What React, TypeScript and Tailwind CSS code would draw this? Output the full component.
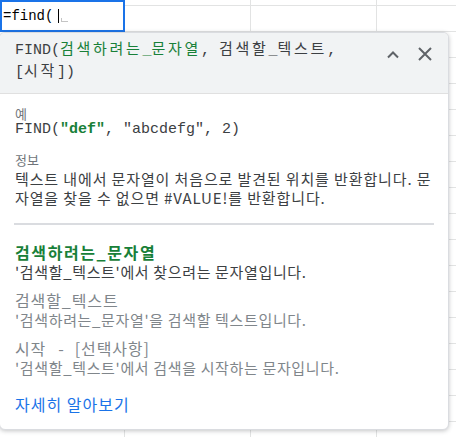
import React from "react"

const mono = "font-['Liberation_Mono','Noto_Sans_CJK_KR',monospace]"

// korean text inside mono runs is double-width in the original
function K({ children }: { children: React.ReactNode }) {
  return <span className="tracking-[2.7px]">{children}</span>
}

function SheetGrid() {
  const cells = Array.from({ length: 19 * 4 })
  return (
    <div className="grid grid-cols-[repeat(4,126px)] -ml-px -mt-[20px]">
      {cells.map((_, i) => (
        <div key={i} className="h-[26px] border-r border-b border-[#e2e3e3]" />
      ))}
    </div>
  )
}

function CellEditor() {
  return (
    <div className="absolute left-0 top-0 w-[125px] h-[32px] border-2 border-[#1a73e8] bg-white pl-px flex items-center">
      <span className={`${mono} text-[14px] leading-[28px] text-black`}>=find(</span>
      <span className="ml-[5px] w-px h-[14px] bg-black" />
      <span className="ml-[2px] mt-[8px] w-[7px] h-[4px] border-l border-b border-[#c4c4c4]" />
    </div>
  )
}

function Param({ name, desc, active }: { name: React.ReactNode; desc: string; active?: boolean }) {
  return (
    <div>
      <div
        className={`text-[16px] leading-[20px] whitespace-nowrap ${
          active ? "font-bold text-[#188038] tracking-[1.6px]" : "text-[#80868b] tracking-[0.9px]"
        }`}
      >
        {name}
      </div>
      <div
        className={`text-[15px] leading-[20px] whitespace-nowrap tracking-[0.65px] ${
          active ? "text-[#3c4043]" : "text-[#80868b]"
        }`}
      >
        {desc}
      </div>
    </div>
  )
}

function FormulaHelp() {
  return (
    <div className="absolute left-[-1px] top-[32px] w-[450px] h-[398px] rounded-md border border-[#dadce0] bg-white shadow-[0_1px_4px_rgba(60,64,67,0.3)] overflow-hidden">
      {/* header */}
      <div className="flex items-start bg-[#f1f3f4] border-b border-[#e0e0e0]">
        <div className={`flex-1 pl-[15px] pt-[7px] pb-[9px] ${mono} text-[15px] leading-[22px] text-[#3c4043] whitespace-nowrap`}>
          FIND(<span className="text-[#188038]"><K>검색하려는</K>_<K>문자열</K></span>, <K>검색할</K>_<K>텍스트</K>,
          <br />
          [<K>시작</K>])
        </div>
        <div className="flex items-center gap-[18px] pt-[14px] pr-[16px] text-[#5f6368]">
          <svg width="14" height="14" viewBox="0 0 14 14" fill="none" stroke="currentColor" strokeWidth="2">
            <path d="M2 10.5L7 5.5l5 5" />
          </svg>
          <svg width="14" height="14" viewBox="0 0 14 14" fill="none" stroke="currentColor" strokeWidth="2">
            <path d="M1 1l12 12M13 1L1 13" />
          </svg>
        </div>
      </div>

      {/* body */}
      <div className="px-[14px] pt-[12px] font-['Noto_Sans_CJK_KR',sans-serif]">
        <div className="text-[13px] leading-[16px] text-[#70757a] pl-px">예</div>
        <div className={`${mono} text-[15px] leading-[16px] text-[#3c4043] pl-px`}>
          FIND(<span className="font-bold text-[#188038]">"def"</span>, "abcdefg", 2)
        </div>
        <div className="mt-[12px] text-[13px] leading-[19px] text-[#70757a] pl-px">정보</div>
        <div className="text-[15px] leading-[19px] text-[#3c4043] whitespace-nowrap tracking-[0.88px] pl-px">
          텍스트 내에서 문자열이 처음으로 발견된 위치를 반환합니다. 문
          <br />
          자열을 찾을 수 없으면 #VALUE!를 반환합니다.
        </div>

        <div className="mt-[16px] h-[2px] bg-[#dadce0]" />

        <div className="mt-[17px] flex flex-col gap-[8px] pl-px">
          <Param active name="검색하려는_문자열" desc="'검색할_텍스트'에서 찾으려는 문자열입니다." />
          <Param name="검색할_텍스트" desc="'검색하려는_문자열'을 검색할 텍스트입니다." />
          <Param
            name={
              <span>
                시작<span className="ml-[12px]">-</span><span className="ml-[10px]">[선택사항]</span>
              </span>
            }
            desc="'검색할_텍스트'에서 검색을 시작하는 문자입니다."
          />
        </div>

        <div className="mt-[16px] text-[16px] leading-[20px] text-[#1a73e8] tracking-[1px] pl-px">자세히 알아보기</div>
      </div>
    </div>
  )
}

export default function App() {
  return (
    <div className="relative w-[456px] h-[437px] overflow-hidden bg-white">
      <SheetGrid />
      <CellEditor />
      <FormulaHelp />
    </div>
  )
}
